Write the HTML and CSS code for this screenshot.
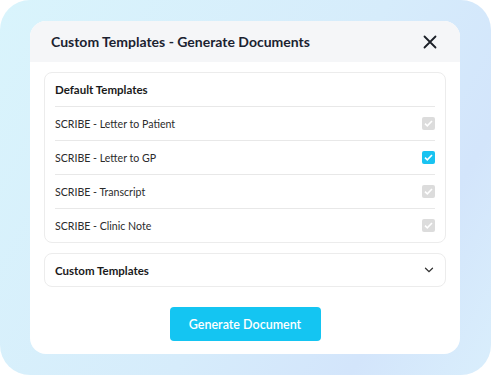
FILE: index.html
```html
<!DOCTYPE html>
<html>
<head>
<meta charset="utf-8">
<link rel="stylesheet" href="styles.css">
</head>
<body>
<div class="bg">
  <div class="modal">
    <div class="modal-head">
      <div class="title">Custom Templates - Generate Documents</div>
      <svg class="close" width="14" height="14" viewBox="0 0 14 14"><path d="M1.5 1.5L12.5 12.5M12.5 1.5L1.5 12.5" stroke="#1b1f27" stroke-width="1.8" stroke-linecap="round"/></svg>
    </div>
    <div class="modal-body">
      <div class="card">
        <div class="card-title">Default Templates</div>
        <div class="row"><span>SCRIBE - Letter to Patient</span><span class="cb disabled"><svg width="9" height="7" viewBox="0 0 9 7"><path d="M1 3.6L3.3 5.8L8 1" stroke="#fff" stroke-width="1.6" fill="none"/></svg></span></div>
        <div class="row"><span>SCRIBE - Letter to GP</span><span class="cb checked"><svg width="9" height="7" viewBox="0 0 9 7"><path d="M1 3.6L3.3 5.8L8 1" stroke="#fff" stroke-width="1.6" fill="none"/></svg></span></div>
        <div class="row"><span>SCRIBE - Transcript</span><span class="cb disabled"><svg width="9" height="7" viewBox="0 0 9 7"><path d="M1 3.6L3.3 5.8L8 1" stroke="#fff" stroke-width="1.6" fill="none"/></svg></span></div>
        <div class="row"><span>SCRIBE - Clinic Note</span><span class="cb disabled"><svg width="9" height="7" viewBox="0 0 9 7"><path d="M1 3.6L3.3 5.8L8 1" stroke="#fff" stroke-width="1.6" fill="none"/></svg></span></div>
      </div>
      <div class="card collapsed">
        <div class="card-title">Custom Templates</div>
        <svg class="chev" width="10" height="6" viewBox="0 0 10 6"><path d="M1.5 1.2L5 4.6L8.5 1.2" stroke="#333" stroke-width="1.3" fill="none" stroke-linecap="round"/></svg>
      </div>
      <div class="actions">
        <button class="btn">Generate Document</button>
      </div>
    </div>
  </div>
</div>
</body>
</html>
```
FILE: styles.css
```css
* { box-sizing: border-box; }
html, body { margin: 0; padding: 0; background: #fff; }
body { font-family: Lato, "Noto Sans", sans-serif; }
.bg {
  width: 491px;
  height: 375px;
  border-radius: 30px;
  background: linear-gradient(120deg, #d9f4fc 0%, #d6ecfb 55%, #d3e5fb 80%, #d9eefc 100%);
  padding: 21px 31px 21px 30px;
}
.modal {
  width: 430px;
  height: 333px;
  background: #fff;
  border-radius: 16px;
  overflow: hidden;
  display: flex;
  flex-direction: column;
}
.modal-head {
  height: 41px;
  background: #f5f6f8;
  display: flex;
  align-items: center;
  justify-content: space-between;
  padding: 0 23px 0 21px;
}
.title {
  font-size: 14px;
  font-weight: 700;
  color: #1b2230;
}
.modal-body {
  padding: 10px 14px 0 14px;
  display: flex;
  flex-direction: column;
}
.card {
  border: 1px solid #ececec;
  border-radius: 8px;
  padding: 0 10px;
}
.card-title {
  height: 33px;
  display: flex;
  align-items: center;
  font-size: 11.5px;
  font-weight: 700;
  color: #1a1a1a;
}
.row {
  height: 34px;
  border-top: 1px solid #e8e8e8;
  display: flex;
  align-items: center;
  justify-content: space-between;
  font-size: 10.6px;
  color: #2b2b2b;
}
.cb {
  width: 13px;
  height: 13px;
  border-radius: 2px;
  display: flex;
  align-items: center;
  justify-content: center;
}
.cb.disabled { background: #dcdcdc; }
.cb.checked { background: #19c3f1; }
.collapsed {
  margin-top: 10px;
  display: flex;
  align-items: center;
  justify-content: space-between;
  padding-right: 11px;
}
.collapsed .card-title { height: 32px; }
.actions {
  display: flex;
  justify-content: center;
  margin-top: 20px;
}
.btn {
  width: 151px;
  height: 34px;
  border: none;
  border-radius: 4px;
  background: #14c5f2;
  color: #fff;
  font-family: Lato, "Noto Sans", sans-serif;
  font-size: 12.5px;
  font-weight: 600;
  padding: 0;
}
```
